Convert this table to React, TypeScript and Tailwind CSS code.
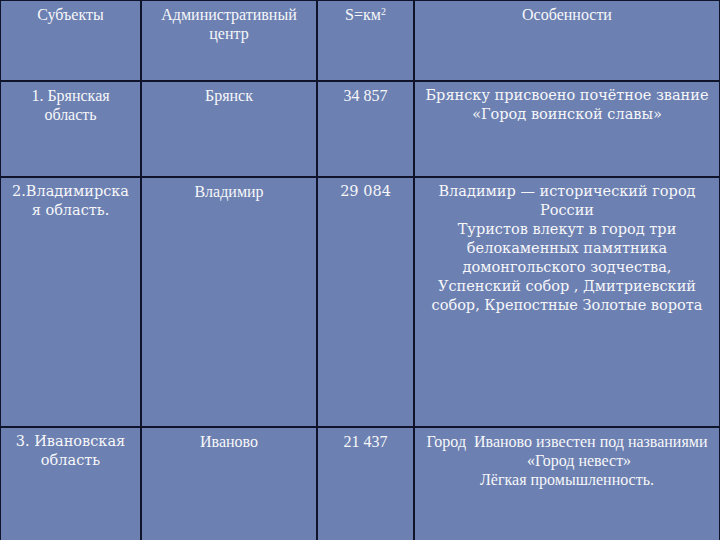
import React from "react"

type Row = {
  subject: string[]
  subjectWide?: boolean
  center: string
  area: string
  areaWide?: boolean
  notes: string[]
  notesWide?: boolean
  h: string
}

const rows: Row[] = [
  {
    subject: ["1. Брянская", "область"],
    center: "Брянск",
    area: "34 857",
    notes: ["Брянску присвоено почётное звание", "«Город воинской славы»"],
    notesWide: true,
    h: "h-[96px]",
  },
  {
    subject: ["2.Владимирска", "я область."],
    subjectWide: true,
    center: "Владимир",
    area: "29 084",
    areaWide: true,
    notes: [
      "Владимир — исторический город",
      "России",
      "Туристов влекут в город три",
      "белокаменных памятника",
      "домонгольского зодчества,",
      "Успенский собор , Дмитриевский",
      "собор, Крепостные Золотые ворота",
    ],
    notesWide: true,
    h: "h-[250px]",
  },
  {
    subject: ["3. Ивановская", "область"],
    subjectWide: true,
    center: "Иваново",
    area: "21 437",
    notes: ["Город  Иваново известен под названиями", "«Город невест»", "Лёгкая промышленность."],
    h: "h-[120px]",
  },
]

const cell = "border-2 border-[#10142a] align-top text-center pt-[4px] px-1 leading-[19px] text-[#f7f7fa]"
const serif = "font-['Liberation_Serif',serif] text-[16px]"
const wide = "font-['DejaVu_Serif',serif] text-[14.5px]"

export default function App() {
  return (
    <div className="w-[720px] h-[540px] overflow-hidden bg-[#6c80b1]">
      <table className="table-fixed border-collapse w-[722px] -mt-px -ml-px">
        <colgroup>
          <col className="w-[141px]" />
          <col className="w-[176px]" />
          <col className="w-[97px]" />
          <col />
        </colgroup>
        <tbody>
          <tr className="h-[81px]">
            <td className={`${cell} ${serif}`}>Субъекты</td>
            <td className={`${cell} ${serif}`}>
              Административный
              <br />
              центр
            </td>
            <td className={`${cell} ${serif}`}>
              S=км<sup className="text-[10px]">2</sup>
            </td>
            <td className={`${cell} ${serif}`}>Особенности</td>
          </tr>
          {rows.map((r, i) => (
            <tr key={i} className={r.h}>
              <td className={`${cell} ${r.subjectWide ? wide : serif}`}>
                {r.subject.map((s, j) => (
                  <div key={j} className="whitespace-nowrap">{s}</div>
                ))}
              </td>
              <td className={`${cell} ${serif}`}>{r.center}</td>
              <td className={`${cell} ${r.areaWide ? wide : serif}`}>{r.area}</td>
              <td className={`${cell} ${r.notesWide ? wide : serif}`}>
                {r.notes.map((s, j) => (
                  <div key={j} className={"whitespace-pre " + (i === 2 && j === 1 ? "pl-6" : "")}>
                    {s}
                  </div>
                ))}
              </td>
            </tr>
          ))}
        </tbody>
      </table>
    </div>
  )
}
